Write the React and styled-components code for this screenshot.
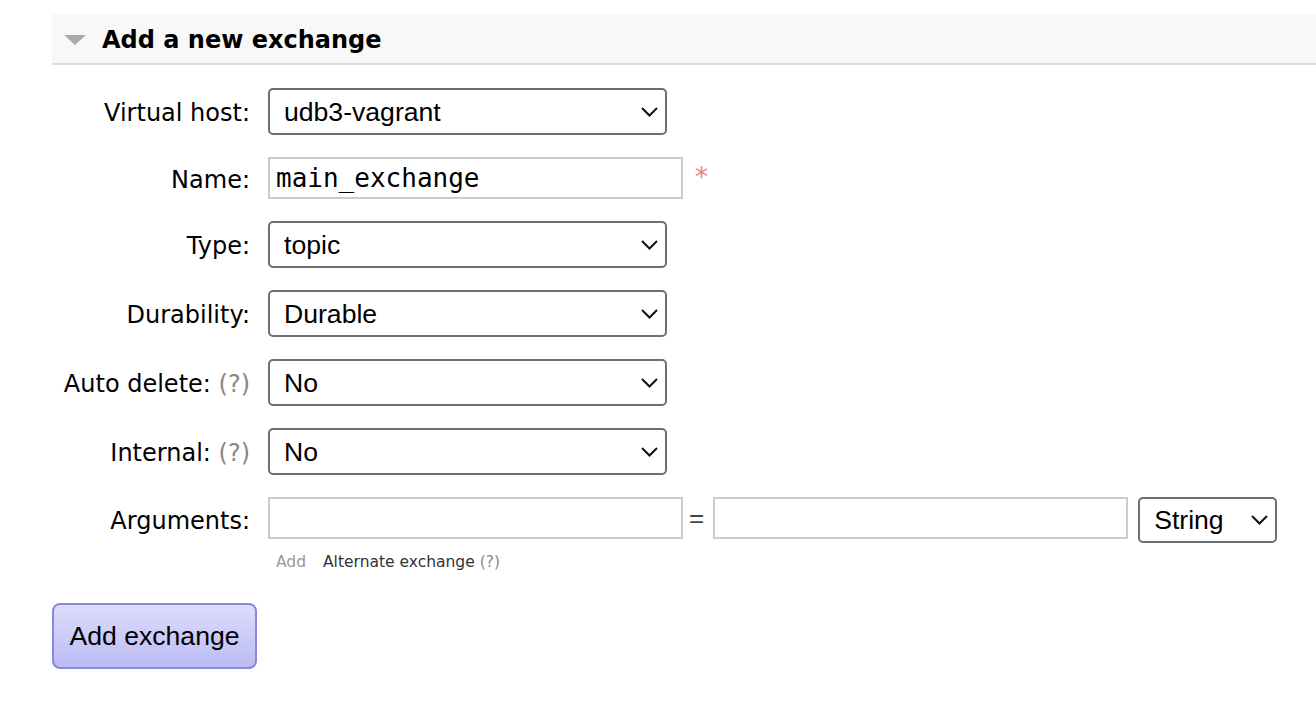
import React from "react";
import styled, { createGlobalStyle } from "styled-components";

const GlobalStyle = createGlobalStyle`
  html, body {
    margin: 0;
    padding: 0;
    background: #fff;
  }
  body {
    font-family: "DejaVu Sans", Verdana, sans-serif;
    color: #000;
  }
`;

const Page = styled.div`
  padding: 14px 0 0 52px;
  width: 1316px;
  height: 704px;
  box-sizing: border-box;
  overflow: hidden;
`;

const SectionHeader = styled.div`
  display: flex;
  align-items: center;
  gap: 16px;
  height: 51px;
  box-sizing: border-box;
  padding: 3px 0 0 12px;
  background: #f8f8f8;
  border-bottom: 2px solid #dddddd;
`;

const Title = styled.h2`
  margin: 0;
  font-size: 24px;
  font-weight: bold;
  color: #000;
`;

const Form = styled.div`
  display: grid;
  grid-template-columns: 198px auto;
  column-gap: 18px;
  row-gap: 22px;
  align-items: center;
  margin-top: 23px;
`;

const Label = styled.label`
  text-align: right;
  font-size: 24px;
  color: #000;
  white-space: nowrap;
  align-self: ${(p) => (p.$top ? "start" : "center")};
  padding-top: ${(p) => (p.$top ? "10px" : "3px")};
`;

const Help = styled.span`
  color: #888;
`;

const Field = styled.div`
  display: flex;
  align-items: ${(p) => (p.$top ? "flex-start" : "center")};
`;

const SelectWrap = styled.div`
  position: relative;
  width: ${(p) => p.$width}px;
  height: ${(p) => p.$height || 47}px;
  margin-left: ${(p) => p.$offset || 0}px;
`;

const Select = styled.select`
  appearance: none;
  width: 100%;
  height: 100%;
  box-sizing: border-box;
  border: 2px solid #6f6f6f;
  border-radius: 5px;
  background: #fff;
  padding: 0 0 0 14px;
  font-family: "Liberation Sans", Arial, sans-serif;
  font-size: 26.6px;
  color: #000;
  outline: none;
`;

const Chevron = styled.svg`
  position: absolute;
  right: 9px;
  top: 50%;
  margin-top: -5px;
  width: 17px;
  height: 10px;
  pointer-events: none;
`;

const TextInput = styled.input`
  width: ${(p) => p.$width || 415}px;
  height: 42px;
  box-sizing: border-box;
  border: 2px solid #cccccc;
  border-radius: 0;
  padding: 0 6px;
  font-family: "DejaVu Sans Mono", monospace;
  font-size: 26px;
  color: #000;
  background: #fff;
  outline: none;
`;

const Required = styled.span`
  color: #f08080;
  font-size: 26px;
  margin-left: 12px;
  position: relative;
  top: -1px;
`;

const Equals = styled.span`
  font-family: "Liberation Sans", Arial, sans-serif;
  font-size: 26px;
  line-height: 42px;
  color: #444;
  margin: 0 9px 0 6px;
`;

const SubLinks = styled.div`
  grid-column: 2;
  display: flex;
  gap: 17px;
  font-size: 15.5px;
  padding-left: 8px;
  margin-top: -12px;
`;

const SubLink = styled.span`
  color: ${(p) => (p.$muted ? "#999" : "#333")};
`;

const Button = styled.button`
  margin-top: 32px;
  width: 205px;
  height: 66px;
  box-sizing: border-box;
  border: 2px solid #8888dd;
  border-radius: 8px;
  background: linear-gradient(#dcdcfc, #bcbcf4);
  font-family: "Liberation Sans", Arial, sans-serif;
  font-size: 26.6px;
  color: #000;
  cursor: pointer;
`;

const Arrow = () => (
  <svg width="22" height="10" viewBox="0 0 22 10">
    <polygon points="0,0 22,0 11,10" fill="#aaaaaa" />
  </svg>
);

function Dropdown({ value, width = 399, height, offset }) {
  return (
    <SelectWrap $width={width} $height={height} $offset={offset}>
      <Select defaultValue={value}>
        <option>{value}</option>
      </Select>
      <Chevron viewBox="0 0 17 10">
        <polyline
          points="1,1 8.5,8.5 16,1"
          fill="none"
          stroke="#111"
          strokeWidth="2"
        />
      </Chevron>
    </SelectWrap>
  );
}

export default function App() {
  return (
    <>
      <GlobalStyle />
      <Page>
        <SectionHeader>
          <Arrow />
          <Title>Add a new exchange</Title>
        </SectionHeader>
        <Form>
          <Label>Virtual host:</Label>
          <Field>
            <Dropdown value="udb3-vagrant" />
          </Field>

          <Label>Name:</Label>
          <Field>
            <TextInput defaultValue="main_exchange" />
            <Required>*</Required>
          </Field>

          <Label>Type:</Label>
          <Field>
            <Dropdown value="topic" />
          </Field>

          <Label>Durability:</Label>
          <Field>
            <Dropdown value="Durable" />
          </Field>

          <Label>
            Auto delete: <Help>(?)</Help>
          </Label>
          <Field>
            <Dropdown value="No" />
          </Field>

          <Label>
            Internal: <Help>(?)</Help>
          </Label>
          <Field>
            <Dropdown value="No" />
          </Field>

          <Label $top>Arguments:</Label>
          <Field $top>
            <TextInput />
            <Equals>=</Equals>
            <TextInput />
            <Dropdown value="String" width={139} height={46} offset={10} />
          </Field>

          <SubLinks>
            <SubLink $muted>Add</SubLink>
            <SubLink>
              Alternate exchange <Help>(?)</Help>
            </SubLink>
          </SubLinks>
        </Form>
        <Button>Add exchange</Button>
      </Page>
    </>
  );
}
